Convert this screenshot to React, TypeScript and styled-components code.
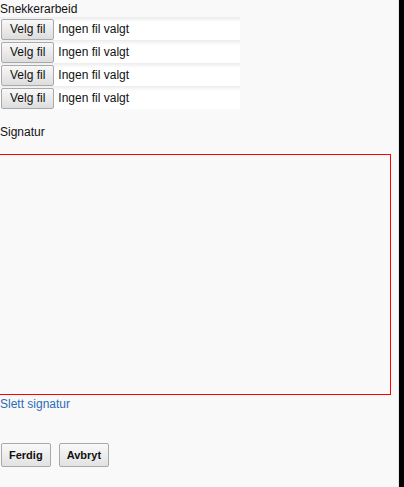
import React from "react";
import styled, { createGlobalStyle } from "styled-components";

const GlobalStyle = createGlobalStyle`
  html, body {
    margin: 0;
    padding: 0;
    background: #000;
  }
  body {
    font-family: "Liberation Sans", Arial, sans-serif;
    font-size: 12px;
    color: #111;
  }
`;

const Root = styled.div`
  display: flex;
  min-height: 487px;
  background: #000;
`;

const Page = styled.div`
  width: 398px;
  min-height: 487px;
  background: #f9f9f9;
  border-right: 1px solid #e4e4e4;
  overflow: hidden;
  display: flex;
  flex-direction: column;
  align-items: flex-start;
`;

const FieldLabel = styled.div<{ $top?: number }>`
  padding-top: ${(p) => p.$top ?? 0}px;
  line-height: 15px;
  font-size: 12px;
  color: #111;
`;

const FileList = styled.div`
  display: flex;
  flex-direction: column;
`;

const FileRow = styled.div`
  width: 240px;
  height: 23px;
  display: flex;
  align-items: center;
  background: linear-gradient(#ececec 0px, #ffffff 5px, #ffffff 100%);
`;

const PickButton = styled.button`
  margin: 1px 0 0 1px;
  height: 21px;
  padding: 0 8px;
  box-sizing: border-box;
  border: 1px solid #a9a9a9;
  border-radius: 2px;
  background: linear-gradient(#f8f8f8, #dddddd);
  font-family: "Liberation Sans", Arial, sans-serif;
  font-size: 12px;
  color: #111;
  line-height: 19px;
`;

const FileStatus = styled.span`
  margin-left: 4px;
  margin-top: 1px;
  font-size: 12px;
  color: #111;
`;

const SignatureLabel = styled(FieldLabel)`
  margin-top: 16px;
  line-height: 14px;
`;

const SignaturePad = styled.div`
  margin-top: 15px;
  margin-left: -1px;
  width: 392px;
  height: 241px;
  box-sizing: border-box;
  border: 1px solid #ff0000;
  background: #f9f9f9;
`;

const ClearLink = styled.a`
  margin-top: 2px;
  line-height: 14px;
  font-size: 12px;
  color: #2b6cb8;
  text-decoration: none;
  cursor: pointer;
`;

const Actions = styled.div`
  margin-top: 32px;
  margin-left: 1px;
  display: flex;
  gap: 8px;
`;

const ActionButton = styled.button`
  height: 24px;
  padding: 0 7px;
  box-sizing: border-box;
  border: 1px solid #a9a9a9;
  border-radius: 2px;
  background: linear-gradient(#f9f9f9, #e2e2e2);
  font-family: "Liberation Sans", Arial, sans-serif;
  font-size: 11px;
  font-weight: bold;
  color: #111;
`;

const Edge = styled.div`
  flex: 1;
  background: #000;
`;

export default function App() {
  const rows = [0, 1, 2, 3];
  return (
    <>
      <GlobalStyle />
      <Root>
        <Page>
          <FieldLabel $top={2}>Snekkerarbeid</FieldLabel>
          <FileList>
            {rows.map((r) => (
              <FileRow key={r}>
                <PickButton type="button">Velg fil</PickButton>
                <FileStatus>Ingen fil valgt</FileStatus>
              </FileRow>
            ))}
          </FileList>
          <SignatureLabel>Signatur</SignatureLabel>
          <SignaturePad />
          <ClearLink>Slett signatur</ClearLink>
          <Actions>
            <ActionButton type="button">Ferdig</ActionButton>
            <ActionButton type="button">Avbryt</ActionButton>
          </Actions>
        </Page>
        <Edge />
      </Root>
    </>
  );
}
